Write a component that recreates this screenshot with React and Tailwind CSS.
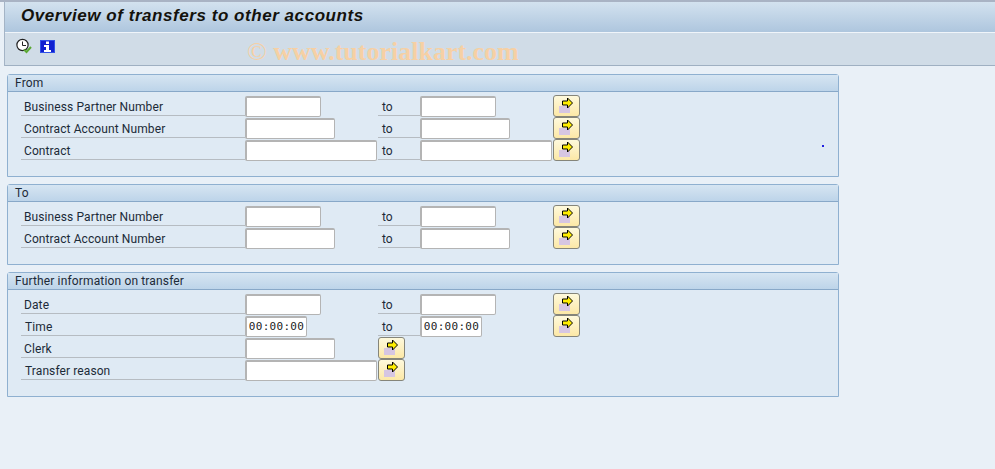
const uiFont = { fontFamily: 'Roboto, sans-serif' };

function ArrowButton() {
  return (
    <button className="w-[27px] h-[22px] shrink-0 rounded-[3px] border border-[#85857a] bg-gradient-to-b from-[#fef9dc] to-[#fce8a6]">
      <svg width="25" height="20" viewBox="0 0 25 20" className="block">
        <rect x="5" y="10" width="11" height="7" fill="#d6c6e2" />
        <path d="M8.5 5H13.5V2L18.5 7L13.5 12V9H8.5Z" fill="#ffee00" stroke="#000" strokeWidth="1" />
      </svg>
    </button>
  );
}

function Field({ width, value }) {
  return (
    <div className={`${width} h-[21px] bg-white border border-[#b4b4b4] rounded-[2px] border-t-2 border-l-2 flex items-center justify-center text-[11px] tracking-[0.3px] text-[#222]`} style={{ fontFamily: '"DejaVu Sans Mono", monospace' }}>
      {value}
    </div>
  );
}

function Row({ label, inset = "pl-[3px]", width, value, range, toWidth, toValue }) {
  return (
    <div className="flex h-[22px]">
      <div className={`w-[224px] h-[20px] border-b border-[#b6bcc2] text-[12px] leading-[22px] tracking-[0.1px] text-[#1c2a38] ${inset}`}>
        {label}
      </div>
      <div className="w-[133px] shrink-0">
        <Field width={width} value={value} />
      </div>
      {range ? (
        <>
          <div className="w-[42px] h-[20px] border-b border-[#b6bcc2] pl-[4px] text-[12px] leading-[22px] text-[#1c2a38]">to</div>
          <div className="w-[133px] shrink-0">
            <Field width={toWidth || width} value={toValue} />
          </div>
        </>
      ) : null}
      <div className="-mt-px">
        <ArrowButton />
      </div>
    </div>
  );
}

function Panel({ title, height, children, dot }) {
  return (
    <div className={`relative w-[832px] ${height} border border-[#8fb0d0] rounded-t-[3px] bg-[#dfeaf4]`}>
      <div className="h-[17px] border-b border-[#88a8c8] bg-gradient-to-b from-[#d6e5f2] to-[#bdd4e9] pl-[7px] text-[12px] leading-[17px] tracking-[0.15px] text-[#1c2a38]">
        {title}
      </div>
      <div className="pl-[13px] pt-[4px]">{children}</div>
      {dot ? <div className="absolute left-[814px] top-[70px] w-[2px] h-[2px] bg-[#2020e0]" /> : null}
    </div>
  );
}

export default function App() {
  return (
    <div className="w-[995px] h-[469px] overflow-hidden bg-[#e9f0f7]" style={uiFont}>
      <div className="h-[2px] bg-[#a9b3c4]" />
      <div className="ml-[4px] border-l border-[#a4b4c6]">
        <div className="h-[30px] bg-gradient-to-b from-[#d3e2ef] to-[#aec6de] pl-[16px] text-[17px] font-bold italic leading-[27px] text-[#14120c] tracking-[0.55px]" style={{ fontFamily: '"Liberation Sans", sans-serif' }}>
          Overview of transfers to other accounts
        </div>
        <div className="h-[34px] border-t border-[#f0f5fa] border-b border-b-[#9fb0c2] bg-[#d0dce7] flex items-start pt-[5px] pl-[11px] gap-[7px] relative">
          <svg width="17" height="17" viewBox="0 0 17 17">
            <circle cx="6.5" cy="7" r="5.6" fill="#fff" stroke="#222" strokeWidth="1.2" />
            <path d="M6.5 3.5V7.5H10" fill="none" stroke="#222" strokeWidth="1" />
            <path d="M8 11.5L10.5 14L15 9" fill="none" stroke="#5aa832" strokeWidth="2" />
          </svg>
          <svg width="15" height="13" viewBox="0 0 15 13" className="mt-[2px]">
            <rect x="0" y="0" width="15" height="13" fill="#1020d0" />
            <rect x="0.5" y="0.5" width="14" height="12" fill="none" stroke="#3050e8" />
            <rect x="6" y="1.5" width="3" height="2.5" fill="#fff" />
            <path d="M4 5H9V10H11V12H4V10H6V7H4Z" fill="#fff" />
          </svg>
          <div className="absolute left-[242px] top-[4px] text-[26px] font-bold leading-[30px] text-[#f6d0a4]" style={{ fontFamily: '"Liberation Serif", serif' }}>
            <span className="font-normal">©</span> www.tutorialkart.com
          </div>
        </div>
      </div>

      <div className="pl-[7px] pt-[8px] flex flex-col gap-[7px]">
        <Panel title="From" height="h-[103px]" dot>
          <Row label="Business Partner Number" width="w-[76px]" range />
          <Row label="Contract Account Number" width="w-[90px]" range />
          <Row label="Contract" width="w-[132px]" range />
        </Panel>
        <Panel title="To" height="h-[81px]">
          <Row label="Business Partner Number" width="w-[76px]" range />
          <Row label="Contract Account Number" width="w-[90px]" range />
        </Panel>
        <Panel title="Further information on transfer" height="h-[125px]">
          <Row label="Date" width="w-[76px]" range />
          <Row label="Time" inset="pl-[4px]" width="w-[62px]" value="00:00:00" toValue="00:00:00" range />
          <Row label="Clerk" width="w-[90px]" />
          <Row label="Transfer reason" inset="pl-[4px]" width="w-[132px]" />
        </Panel>
      </div>
    </div>
  );
}
